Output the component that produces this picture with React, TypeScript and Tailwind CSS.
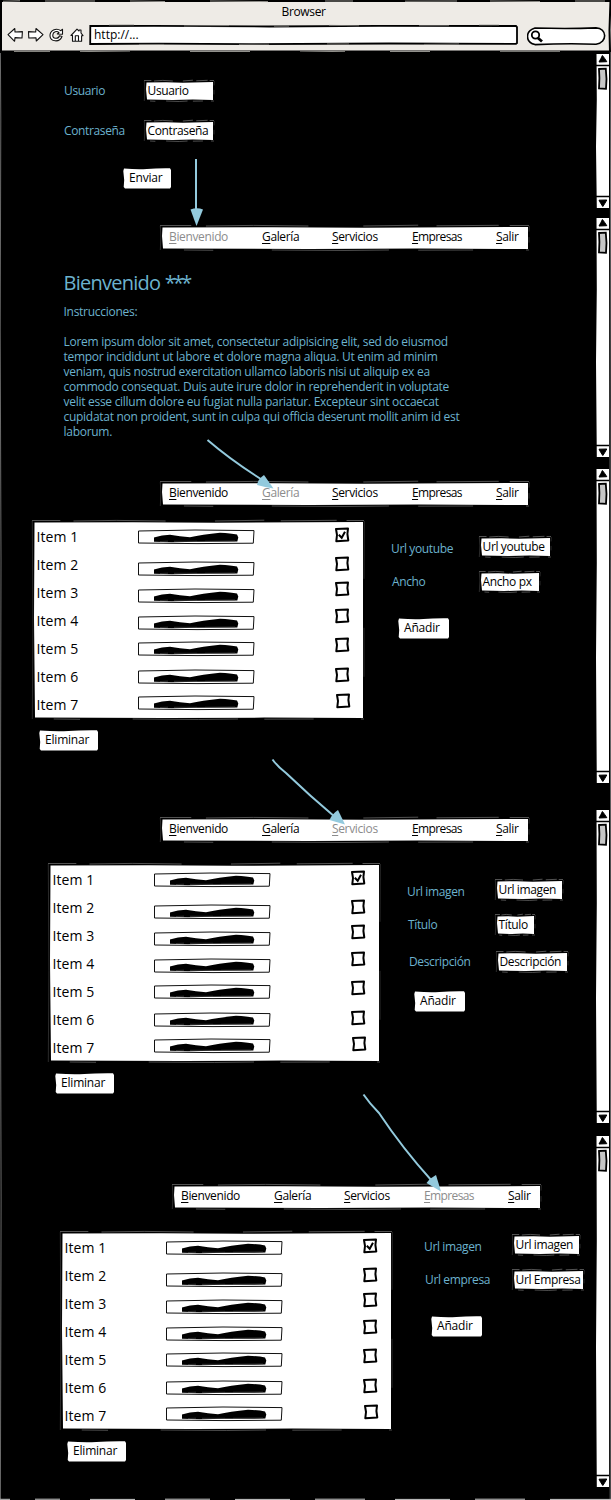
import React from "react";

const blue = "text-[#6cb2ce]";

/* Hand-drawn white panel: offset sketch strokes around the fill */
function Sketch({ className = "", w, h, children }: { className?: string; w: number; h: number; children?: React.ReactNode }) {
  const a = (f: number) => 2 + w * f;
  return (
    <div className={`relative shrink-0 ${className}`} style={{ width: w, height: h }}>
      <svg className="absolute -left-0.5 -top-0.5 overflow-visible" width={w + 4} height={h + 4} fill="none">
        <path d={`M2.5 2.4 L${a(0.3)} 2.2 L${a(0.55)} 2.8 L${w + 2} 2 V${h + 2} L${a(0.7)} ${h + 1.6} L${a(0.4)} ${h + 2} L3 ${h + 1.6} L2 ${h * 0.5} Z`} fill="#fff" />
        <path d={`M0 0.5 H${a(0.08)} M${a(0.12)} 1 L${a(0.25)} 0.4 L${a(0.4)} 1 M${a(0.55)} 1 L${a(0.7)} 0.2 M${a(0.75)} 0.8 L${a(0.92)} 0.3 M${a(0.95)} 0.5 H${w + 3}`} stroke="#8a8a8a" strokeWidth="0.6" />
        <path d={`M${a(0.06)} ${h + 3} L${a(0.14)} ${h + 3.3} M${a(0.3)} ${h + 3} L${a(0.5)} ${h + 3.5} L${a(0.62)} ${h + 3} M${a(0.7)} ${h + 3.2} L${a(0.85)} ${h + 3} M${w} ${h + 3} h3`} stroke="#808080" strokeWidth="0.6" />
        <path d={`M0.3 1 L0.9 ${h * 0.55} L0.3 ${h + 3} M${w + 3.3} 1 L${w + 3} ${h * 0.3} M${w + 3} ${h * 0.55} V${h * 0.8}`} stroke="#555" strokeWidth="0.5" />
      </svg>
      <div className="relative h-full">{children}</div>
    </div>
  );
}

function Menu({ active, className = "" }: { active: string; className?: string }) {
  const items: [string, string][] = [
    ["Bienvenido", "w-[93px]"],
    ["Galería", "w-[70px]"],
    ["Servicios", "w-[80px]"],
    ["Empresas", "w-[84px]"],
    ["Salir", "w-[30px]"],
  ];
  return (
    <Sketch w={366} h={22} className={className}>
      <nav className="flex h-full pl-[7px]">
        {items.map(([t, w]) => (
          <span key={t} className={`${w} shrink-0 text-[12px] leading-[20px] ${t === "Empresas" ? "tracking-[-0.62px]" : "tracking-[-0.36px]"} ${t === active ? "text-[#8c8c8c]" : "text-black"}`}>
            <span className="underline decoration-1 underline-offset-2">{t[0]}</span>
            {t.slice(1)}
          </span>
        ))}
      </nav>
    </Sketch>
  );
}

function Button({ children, w, className = "" }: { children: string; w: number; className?: string }) {
  return (
    <button className={`relative block h-5 shrink-0 text-left ${className}`} style={{ width: w }}>
      <svg className="absolute inset-0" width={w} height="21" fill="#fff">
        <path d={`M1 0.6 Q${w * 0.3} 1.6 ${w * 0.5} 1 Q${w * 0.7} 0 ${w - 1} 0.2 L${w} 2 V19 L${w - 1} 20.5 L2 20.6 L0.7 19 L1.2 12 L0.3 3 Z`} />
      </svg>
      <span className="relative block pl-1.5 text-[12px] leading-[18px] tracking-[-0.2px] text-black">{children}</span>
    </button>
  );
}

function Scrollbar({ h, className = "" }: { h: number; className?: string }) {
  return (
    <svg className={`shrink-0 ${className}`} width="15" height={h} fill="none">
      <path d={`M0.5 1 H13 V${h - 1} H0.8 L0 ${h * 0.6} L0.8 ${h * 0.3} Z`} fill="#fff" />
      <path d="M3 9 Q5 5.5 6.4 2.5 Q8.5 5 10.8 8.7 Z" fill="#000" stroke="#000" />
      <path d={`M0 12.5 H13 M0 ${h - 12.5} H13`} stroke="#000" strokeWidth="1.6" />
      <path d="M3 16 L9.8 15.7 L10.5 26 L10 35.8 L3 35.5 L3.4 25 Z" fill="#c6c6c6" stroke="#000" strokeWidth="1.8" />
      <path d={`M3 ${h - 8.8} L10.8 ${h - 9} Q8.6 ${h - 5} 6.8 ${h - 2.5} Q5 ${h - 5} 3 ${h - 8.8} Z`} fill="#000" stroke="#000" />
    </svg>
  );
}

function Section({ h, barTop, barH, children }: { h: number; barTop: string; barH: number; children: React.ReactNode }) {
  return (
    <section className="flex" style={{ height: h }}>
      <div className="w-[596px] shrink-0">{children}</div>
      <Scrollbar h={barH} className={barTop} />
    </section>
  );
}

function Field({ label, value, w, className, labelW, shift = "" }: { label: string; value: string; w: number; className: string; labelW: string; shift?: string }) {
  return (
    <div className={`flex h-[18px] items-start text-[12px] leading-[18px] tracking-[-0.36px] ${className}`}>
      <span className={`${labelW} ${shift} shrink-0 whitespace-nowrap ${blue}`}>{label}</span>
      <Sketch w={w} h={18}>
        <span className="block whitespace-nowrap pl-[1.5px] leading-[18px] text-black">{value}</span>
      </Sketch>
    </div>
  );
}

function Bar() {
  return (
    <svg width="118" height="16" fill="none">
      <path d="M1.5 2 L58 1 L117 1.6 L116.3 14.2 L60 14.6 L1.5 14 Z" stroke="#111" strokeWidth="1" />
      <path d="M17 8.6 Q25 6 33 5.8 Q43 7.6 53 8.3 Q65 5.6 83 3.8 Q94 4.2 100 5.6 L101.3 8.5 L100.3 12.6 L61 12.8 L35 13.2 L17 12.8 Z" fill="#000" />
      <path d="M23 12.5 L31 12.2 M37 12.3 H60 M68 12.3 L98 12" stroke="#555" strokeWidth="0.6" />
    </svg>
  );
}

function Check({ on }: { on: boolean }) {
  return (
    <svg width="16" height="16" fill="none" stroke="#000">
      <path d="M2 2 L14 1.6 L13.4 7 L14.3 13.5 L2.3 14.2 L3 8 Z" strokeWidth="2" strokeLinejoin="round" />
      {on && <path d="M4.8 7.7 L7.7 10.8 L11 4.7" strokeWidth="2" />}
    </svg>
  );
}

const barShift = ["mt-[7px]", "mt-[11px]", "mt-[10px]", "mt-[9px]", "mt-[7px]", "mt-[7px]", "mt-[5px]"];
const checkShift = ["mt-[5px]", "mt-[6px]", "mt-[3px]", "mt-[2px]", "mt-[3px]", "mt-[5px]", "mt-[3px]"];

function Items({ className }: { className: string }) {
  return (
    <Sketch w={329} h={196} className={className}>
      {barShift.map((b, i) => (
        <div key={i} className="flex h-7 text-[14px] leading-[30px] tracking-[0.1px] text-black">
          <span className="w-[103px] pl-[2.5px]">Item {i + 1}</span>
          <div className={`w-[197px] ${b}`}><Bar /></div>
          <div className={`${checkShift[i]} ${i === 6 ? "pl-px" : ""}`}><Check on={i === 0} /></div>
        </div>
      ))}
    </Sketch>
  );
}

function Header() {
  return (
    <header className="h-[52px] bg-[#eeebe6]">
      <svg className="absolute left-0 top-0" width="611" height="52" fill="none">
        <path d="M0 1 H611 M1 0 V52 M0 51.5 H611 M610.5 0 L609.5 30 L610 52" stroke="#000" strokeWidth="2" />
        <path d="M3 1.3 L20 0.8 M45 1 H95 M130 1 L165 1.5 M210 1 L268 1.6 M325 1 H353 M405 1.2 L457 1 M490 1 L540 1.5 M575 1 H605 M14 51.6 H50 M80 51.4 L130 52 M190 51.5 H250 M300 52 L345 51.3 M390 51.5 H430 M500 51.3 H560" stroke="#92918c" strokeWidth="1" />
      </svg>
      <div className="h-6 pl-[281.5px] pt-[2px] text-[12px] leading-5 tracking-[-0.35px]">Browser</div>
      <div className="relative flex h-6 items-start">
        <svg className="ml-[7px] mt-0.5 shrink-0" width="78" height="18" fill="#fff" stroke="#111" strokeWidth="1.1" strokeLinejoin="round">
          <path d="M1 8.7 L7.8 2.5 L8 6 L15.4 5.6 L15 12 L8 11.6 L7.6 15.3 Z" />
          <path d="M36 8.7 L29 2.5 L28.7 6 L21.5 5.6 L21.8 12 L29 11.7 L29.3 15 Z" />
          <path d="M55.5 3.2 L53.9 4.7 C49 1.3 42.7 4.6 43 10 C43.4 15.8 52.5 16.9 55 10.5 L52.6 9.8 C51.3 13.5 45.5 13 45.8 9 C46 5.5 50 4.5 52 6.7 L50.3 8 L55.5 8.2 Z" />
          <path d="M64 9.5 L70 3.2 L72 5 L72.2 4 L74 4 L74 7 L76 9.6 L74.6 9.8 V15.2 H65.5 V9.4 Z M68.3 15 V9.8 H71.5 V15" />
        </svg>
        <div className="relative ml-[4px] h-5 w-[429px] shrink-0 pl-[5px] text-[12px] leading-[21px]">
          <svg className="absolute left-0 top-0" width="429" height="22" fill="#fff">
            <path d="M1.3 2 L65 1.8 L180 2.5 L290 1.8 L427 2 L428 3 V19 L427 19.8 L300 19.5 L160 20.2 L70 19.6 L1.2 20 Z" stroke="#000" strokeWidth="1.8" />
            <path d="M20 1 L45 0.9 M95 2 L140 1.6 M185 2.2 H200 M240 1.3 L270 1.8 M330 1.7 H360 M390 1 H410 M50 20.4 H75 M150 20.4 L180 20.2 M238 19.9 H260 M335 20.4 L370 19.9" stroke="#8e8d88" strokeWidth="0.7" />
          </svg>
          <span className="relative">http://...</span>
        </div>
        <svg className="ml-[9px] mt-[3px] shrink-0" width="80" height="20" fill="#fff" stroke="#000">
          <path d="M8 1 Q40 2 69 0.9 C80 1 81 15.5 69 17.2 Q40 16.2 8 17.6 C-2 15 -2 4 8 1 Z" strokeWidth="1.6" />
          <circle cx="8.5" cy="8" r="3.7" strokeWidth="1.8" />
          <path d="M11 11 L15 14.5" strokeWidth="2.8" />
        </svg>
      </div>
    </header>
  );
}

function Arrow({ d, head }: { d: string; head: string }) {
  return (
    <>
      <path d={d} fill="none" stroke="#93cadd" strokeWidth="2" />
      <path d={head} fill="#93cadd" />
    </>
  );
}

export default function App() {
  return (
    <div className="relative h-[1500px] w-[611px] overflow-hidden bg-black font-['Open_Sans','Noto_Sans',sans-serif] text-black">
      <Header />
      <Section h={164} barTop="mt-px" barH={156}>
        <Field label="Usuario" value="Usuario" w={67} labelW="w-[82px]" className="ml-16 pt-[30px]" />
        <Field label="Contraseña" value="Contraseña" w={67} labelW="w-[82px]" className="ml-16 mt-[10px] pt-[30px]" />
        <Button w={48} className="ml-[123px] mt-[46px]">Enviar</Button>
      </Section>
      <Section h={252} barTop="mt-px" barH={241}>
        <Menu active="Bienvenido" className="ml-[162px] mt-[11px]" />
        <article className={`ml-[63.5px] mt-[19px] ${blue}`}>
          <h1 className="text-[20px] leading-[30px] tracking-[-0.75px]">
            Bienvenido <span className="tracking-[-2.8px]">***</span>
          </h1>
          <div className="mt-[6px] whitespace-pre text-[12px] leading-[15px] tracking-[-0.28px]">
            <p>Instrucciones:</p>
            <p className="mt-[15px]">{"Lorem ipsum dolor sit amet, consectetur adipisicing elit, sed do eiusmod\ntempor incididunt ut labore et dolore magna aliqua. Ut enim ad minim\nveniam, quis nostrud exercitation ullamco laboris nisi ut aliquip ex ea\ncommodo consequat. Duis aute irure dolor in reprehenderit in voluptate\nvelit esse cillum dolore eu fugiat nulla pariatur. Excepteur sint occaecat\ncupidatat non proident, sunt in culpa qui officia deserunt mollit anim id est\nlaborum."}</p>
          </div>
        </article>
      </Section>
      <Section h={340} barTop="mt-0" barH={316}>
        <Menu active="Galería" className="ml-[162px] mt-[15px]" />
        <div className="flex">
          <div>
            <Items className="ml-[34px] mt-[17px]" />
            <Button w={59} className="ml-[39px] mt-3">Eliminar</Button>
          </div>
          <div className="ml-7 pt-[33px]">
            <Field label="Url youtube" value="Url youtube" w={69} labelW="w-[90px]" className="" shift="pt-0.5" />
            <Field label="Ancho" value="Ancho px" w={58} labelW="w-[89px]" className="ml-px mt-[17px]" />
            <Button w={51} className="ml-[7px] mt-[27px]">Añadir</Button>
          </div>
        </div>
      </Section>
      <Section h={326} barTop="mt-px" barH={315}>
        <Menu active="Servicios" className="ml-[162px] mt-[11px]" />
        <div className="flex">
          <div>
            <Items className="ml-[50px] mt-6" />
            <Button w={59} className="ml-[55px] mt-3">Eliminar</Button>
          </div>
          <div className="ml-7 pt-10">
            <Field label="Url imagen" value="Url imagen" w={65} labelW="w-[90px]" className="" shift="pt-0.5" />
            <Field label="Título" value="Título" w={37} labelW="w-[89px]" className="ml-px mt-[17px]" />
            <Field label="Descripción" value="Descripción" w={69} labelW="w-[89px]" className="ml-0.5 mt-[19px]" />
            <Button w={51} className="ml-[7px] mt-[20px]">Añadir</Button>
          </div>
        </div>
      </Section>
      <Section h={366} barTop="mt-px" barH={353}>
        <Menu active="Empresas" className="ml-[174px] mt-[52px]" />
        <div className="flex">
          <div>
            <Items className="ml-[62px] mt-[25px]" />
            <Button w={59} className="ml-[67px] mt-3">Eliminar</Button>
          </div>
          <div className="ml-[33px] pt-[28px]">
            <Field label="Url imagen" value="Url imagen" w={65} labelW="w-[90px]" className="" shift="pt-0.5" />
            <Field label="Url empresa" value="Url Empresa" w={69} labelW="w-[89px]" className="ml-px mt-[17px]" />
            <Button w={51} className="ml-[7px] mt-[27px]">Añadir</Button>
          </div>
        </div>
      </Section>
      <svg className="pointer-events-none absolute left-0 top-0" width="611" height="1500">
        <Arrow d="M196 159 V212" head="M190.5 209.5 Q197 207 203 209.5 L196.5 226 Z" />
        <Arrow d="M207.5 440 Q232 461 264 481" head="M264 475 Q258 479 257 485 Q265 487 273.5 488.5 Z" />
        <Arrow d="M272.5 759.5 Q278 767 286 773 Q310 796 335 817" head="M338 810 Q332 814 329.5 820 L345 824.5 Z" />
        <Arrow d="M363.5 1094.5 Q370 1104 379 1113 Q403 1149 432 1181" head="M436 1175 Q430 1178 426.5 1183 L441 1191.5 Z" />
        <path d="M0.4 53 L0.8 120 L0.2 330 L1 560 L0.3 900 L1.1 1200 L0.4 1499 M610.8 52 L610 400 L610.8 900 L610.2 1499" fill="none" stroke="#999" strokeWidth="0.7" />
        <path d="M0 1499.3 H10 M35 1499.2 H60 M90 1499.4 H135 M165 1499.2 H210 M235 1499.4 H290 M315 1499.2 H365 M395 1499.4 H450 M475 1499.2 H525 M550 1499.4 H611" fill="none" stroke="#ccc" strokeWidth="1" />
      </svg>
    </div>
  );
}
